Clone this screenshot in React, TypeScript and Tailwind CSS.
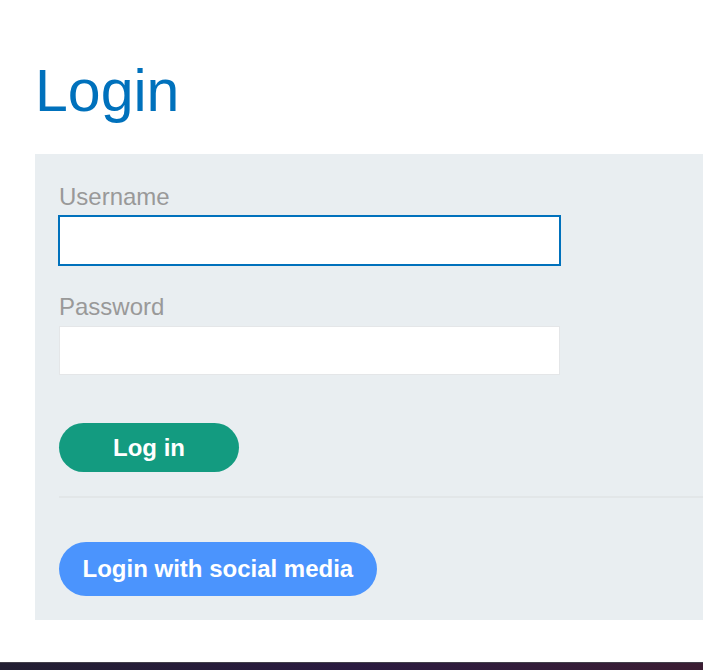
import { useState } from "react";

export default function App() {
  const [username, setUsername] = useState("");
  const [password, setPassword] = useState("");

  return (
    <div className="flex min-h-[670px] flex-col bg-white font-['Liberation_Sans',Arial,sans-serif]">
      <h1 className="mt-[54px] mb-[26px] pl-[35px] text-[59px] leading-[74px] font-normal text-[#0071bc]">
        Login
      </h1>

      <section className="ml-[35px] bg-[#e9eef1] pt-[29px] pb-[24px] pl-[24px]">
        <form className="flex flex-col" onSubmit={(e) => e.preventDefault()}>
          <label
            htmlFor="username"
            className="mb-[5px] text-[24px] leading-[28px] text-[#999999]"
          >
            Username
          </label>
          <input
            id="username"
            value={username}
            onChange={(e) => setUsername(e.target.value)}
            className="h-[49px] w-[501px] border border-[#0071bc] bg-white px-3 text-[20px] outline-none ring-1 ring-[#0071bc]"
          />

          <label
            htmlFor="password"
            className="mt-[28px] mb-[5px] text-[24px] leading-[28px] text-[#999999]"
          >
            Password
          </label>
          <input
            id="password"
            type="password"
            value={password}
            onChange={(e) => setPassword(e.target.value)}
            className="h-[49px] w-[501px] border border-[#e4e6e8] bg-white px-3 text-[20px] outline-none"
          />

          <button
            type="submit"
            className="mt-[48px] h-[49px] w-[180px] rounded-full bg-[#139b80] text-[24px] font-bold text-white"
          >
            Log in
          </button>
        </form>

        {/* Divider */}
        <div className="mt-[24px] h-[2px] bg-[#e2e6e8]" />

        <button className="mt-[44px] h-[54px] rounded-full bg-[#4b94fd] px-[23.5px] text-[24px] font-bold text-white">
          Login with social media
        </button>
      </section>

      {/* Taskbar strip */}
      <div className="mt-auto h-[8px] border-t border-[#43404b] bg-gradient-to-r from-[#221e32] via-[#2a1a40] to-[#3b1d33]" />
    </div>
  );
}
